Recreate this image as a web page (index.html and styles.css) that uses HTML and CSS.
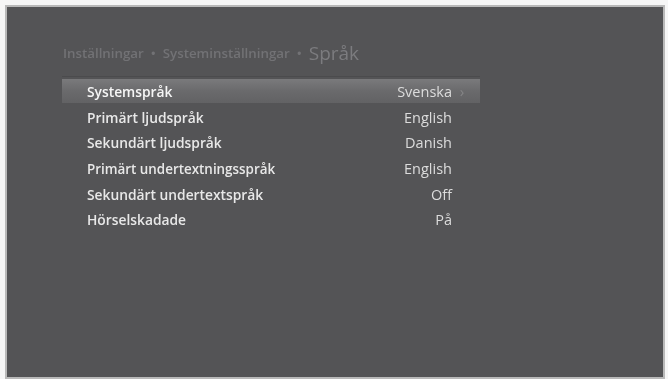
FILE: index.html
```html
<!DOCTYPE html>
<html lang="sv">
<head>
    <meta charset="UTF-8">
    <meta name="viewport" content="width=device-width, initial-scale=1.0">
    <title>Språk</title>
    <link rel="stylesheet" href="styles.css">
</head>
<body>
    <div class="frame">
        <div class="screen">
            <div class="breadcrumb">
                <span>Inställningar</span>
                <span class="sep">•</span>
                <span>Systeminställningar</span>
                <span class="sep">•</span>
                <span class="current">Språk</span>
            </div>

            <div class="menu">
                <div class="menu-item selected">
                    <span class="label">Systemspråk</span>
                    <span class="value">Svenska<span class="arrow">›</span></span>
                </div>
                <div class="menu-item">
                    <span class="label">Primärt ljudspråk</span>
                    <span class="value">English</span>
                </div>
                <div class="menu-item">
                    <span class="label">Sekundärt ljudspråk</span>
                    <span class="value">Danish</span>
                </div>
                <div class="menu-item small">
                    <span class="label">Primärt undertextningsspråk</span>
                    <span class="value">English</span>
                </div>
                <div class="menu-item">
                    <span class="label">Sekundärt undertextspråk</span>
                    <span class="value">Off</span>
                </div>
                <div class="menu-item">
                    <span class="label">Hörselskadade</span>
                    <span class="value">På</span>
                </div>
            </div>
        </div>
    </div>
</body>
</html>
```

FILE: styles.css
```css
body {
    margin: 0;
    padding: 0;
    background: #f6f6f6;
    font-family: "Open Sans", "DejaVu Sans", sans-serif;
}

.frame {
    width: 660px;
    height: 374px;
    margin: 5px 0 0 5px;
    background: #b9b9b9;
    padding: 2px;
    box-sizing: border-box;
}

.screen {
    height: 100%;
    background: #545456;
    padding-top: 33px;
    box-sizing: border-box;
}

.breadcrumb {
    margin-left: 56px;
    color: #727275;
    font-size: 13.3px;
    font-weight: 600;
    height: 26px;
    display: flex;
    align-items: center;
    gap: 7px;
    filter: blur(0.6px);
}

.breadcrumb .current {
    font-size: 19px;
    font-weight: 400;
    color: #7c7c7f;
}

.menu {
    margin: 10px 0 0 55px;
    width: 418px;
    border-top: 1px solid #4b4b4d;
    padding-top: 2px;
}

.menu-item {
    display: flex;
    justify-content: space-between;
    align-items: center;
    height: 25.6px;
    padding: 0 28px 0 25px;
    color: #e8e8e8;
    font-size: 13.8px;
    font-weight: 600;
}

.menu-item.selected {
    height: 24px;
    margin-bottom: 1.6px;
    padding-right: 8px;
    background: linear-gradient(180deg, #7a7a7c, #6a6a6c 50%, #626264);
    color: #f6f6f6;
}

.menu-item.small {
    font-size: 13.4px;
}

.menu-item .label,
.menu-item .value {
    filter: blur(0.3px);
}

.menu-item .value {
    display: flex;
    align-items: center;
    font-weight: 400;
    font-size: 14.5px;
    color: #dcdcdc;
}

.arrow {
    width: 20px;
    text-align: center;
    color: #858587;
    font-size: 15px;
}
```
